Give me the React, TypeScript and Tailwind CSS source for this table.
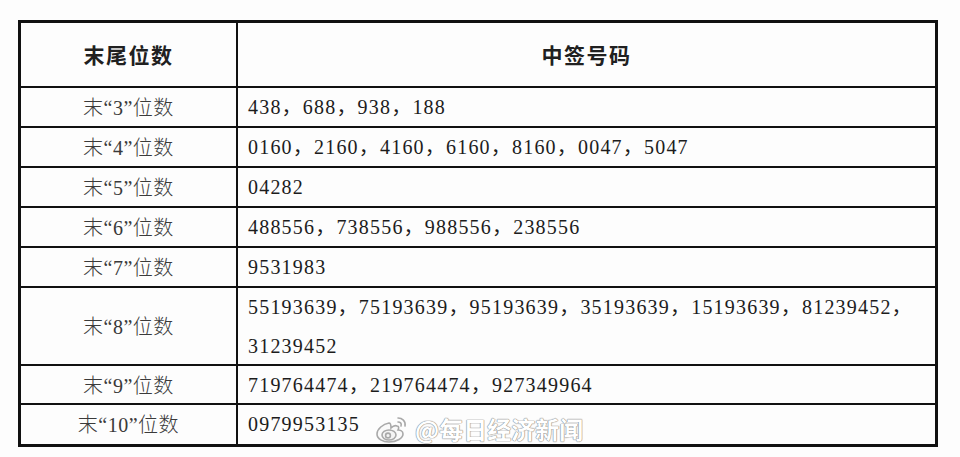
const rows = [
  { label: "末“3”位数", nums: ["438，688，938，188"] },
  { label: "末“4”位数", nums: ["0160，2160，4160，6160，8160，0047，5047"] },
  { label: "末“5”位数", nums: ["04282"] },
  { label: "末“6”位数", nums: ["488556，738556，988556，238556"] },
  { label: "末“7”位数", nums: ["9531983"] },
  {
    label: "末“8”位数",
    nums: ["55193639，75193639，95193639，35193639，15193639，81239452，", "31239452"],
  },
  { label: "末“9”位数", nums: ["719764474，219764474，927349964"] },
  { label: "末“10”位数", nums: ["0979953135"] },
];

const serif = "font-['Liberation_Serif','Noto_Sans_CJK_SC',serif]";

function WeiboMark() {
  return (
    <svg width="36" height="30" viewBox="0 0 36 30" fill="none" stroke="#a9a9a9" strokeWidth="1.6">
      <path d="M14 9c-6 1-12 6-12 11 0 5 6 8 12 8 8 0 14-4 14-8 0-3-3-4-5-4 1-2 1-4-1-4-2-1-5 1-6 2 0-3-1-5-2-5z" fill="#fafafa" />
      <ellipse cx="14" cy="21" rx="7" ry="5" fill="#f4f4f4" />
      <circle cx="13" cy="21.5" r="2.4" />
      <path d="M23 4c4 0 8 3 7 8" strokeLinecap="round" />
      <path d="M23 8c2 0 4 1 3 4" strokeLinecap="round" />
    </svg>
  );
}

export default function App() {
  return (
    <div className="relative h-[457px] w-[960px] bg-[#fdfdfd] pl-[18px] pt-[20px] text-[#1c1c1c]">
      <div className="w-[920px] border-[3px] border-[#111]">
        {/* header */}
        <div className="grid h-[65px] grid-cols-[217px_1fr] border-b-2 border-[#111]">
          <div className="flex items-center justify-center border-r-2 border-[#111] font-['Noto_Sans_CJK_SC',sans-serif] text-[21px] font-bold tracking-[1.5px] text-[#202020]">
            末尾位数
          </div>
          <div className="flex items-center justify-center font-['Noto_Sans_CJK_SC',sans-serif] text-[21px] font-bold tracking-[1.5px] text-[#202020]">
            中签号码
          </div>
        </div>

        {rows.map((row, i) => {
          const last = i === rows.length - 1;
          const tall = row.nums.length > 1;
          return (
            <div
              key={row.label}
              className={
                "grid grid-cols-[217px_1fr] " +
                (last ? "h-[40px]" : "border-b-2 border-[#111] ") +
                (tall ? "h-[78px]" : i === 6 ? "h-[39px]" : "h-[40px]")
              }
            >
              <div
                className={`flex items-center justify-center border-r-2 border-[#111] ${serif} text-[20px] font-light tracking-[0.5px] text-[#3a3a3a]`}
              >
                {row.label}
              </div>
              <div className={`flex flex-col justify-center pl-[10px] ${serif} text-[20px] leading-[39px] tracking-[1.2px]`}>
                {row.nums.map((n) => (
                  <div key={n} className="whitespace-nowrap">
                    {n}
                  </div>
                ))}
              </div>
            </div>
          );
        })}
      </div>

      {/* watermark */}
      <div className="pointer-events-none absolute left-[375px] top-[414px] flex items-center gap-[4px]">
        <WeiboMark />
        <span className="font-['Noto_Sans_CJK_SC',sans-serif] text-[24px] font-bold leading-none text-white [text-shadow:0_0_1px_#8a8a8a,0_0_1px_#8a8a8a,0_0_1px_#8a8a8a]">
          @每日经济新闻
        </span>
      </div>
    </div>
  );
}
